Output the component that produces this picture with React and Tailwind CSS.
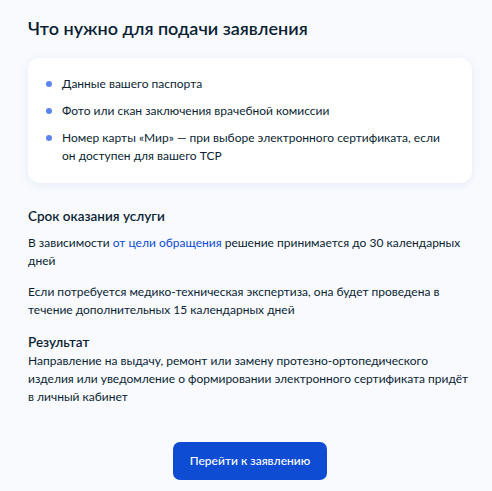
import React from "react";

const docs = [
  "Данные вашего паспорта",
  "Фото или скан заключения врачебной комиссии",
  "Номер карты «Мир» — при выборе электронного сертификата, если он доступен для вашего ТСР",
];

const Bullet = ({ text }) => (
  <li className="flex items-start gap-[10px]">
    <span className="mt-[6px] w-[6px] h-[6px] rounded-full bg-[#5a84ee] flex-shrink-0" />
    <span>{text}</span>
  </li>
);

const App = () => {
  return (
    <div className="w-full min-h-[491px] bg-[#f8fafe] text-[#0b1f33] font-['Lato','Noto_Sans',sans-serif] pl-[28px] pr-[20px] pt-[15px] pb-[10px]">
      <h1 className="text-[18px] leading-[26px] font-semibold">Что нужно для подачи заявления</h1>

      <div className="mt-[17px] bg-white rounded-[12px] shadow-[0_2px_8px_rgba(180,195,225,0.25)] pl-[18px] pr-[24px] pt-[17px] pb-[18px]">
        <ul className="flex flex-col gap-[9px] text-[12px] leading-[18px]">
          {docs.map((d) => (
            <Bullet key={d} text={d} />
          ))}
        </ul>
      </div>

      <h2 className="mt-[23px] text-[13.5px] leading-[20px] font-semibold">Срок оказания услуги</h2>
      <p className="mt-[8px] text-[12px] leading-[18px]">
        В зависимости <span className="text-[#0d4cd3]">от цели обращения</span> решение принимается до 30 календарных дней
      </p>
      <p className="mt-[13px] text-[12px] leading-[18px]">
        Если потребуется медико-техническая экспертиза, она будет проведена в течение дополнительных 15 календарных дней
      </p>

      <h2 className="mt-[13px] text-[13.5px] leading-[20px] font-semibold">Результат</h2>
      <p className="mt-0 text-[12px] leading-[18px]">
        Направление на выдачу, ремонт или замену протезно-ортопедического изделия или уведомление о формировании электронного сертификата придёт в личный кабинет
      </p>

      <div className="mt-[36px] flex justify-center">
        <button className="w-[154px] h-[38px] rounded-[7px] bg-[#0d4cd3] text-white text-[12px] font-medium">
          Перейти к заявлению
        </button>
      </div>
    </div>
  );
};

export default App;
